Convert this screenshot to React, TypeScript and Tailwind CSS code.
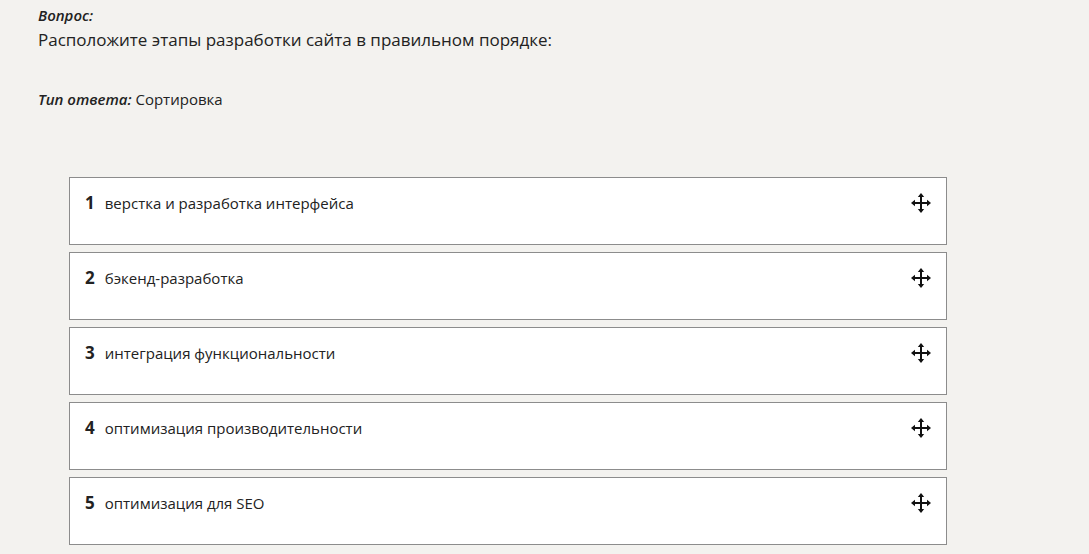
import React from 'react';

const steps = [
  'верстка и разработка интерфейса',
  'бэкенд-разработка',
  'интеграция функциональности',
  'оптимизация производительности',
  'оптимизация для SEO',
];

const MoveIcon = () => (
  <svg width="22" height="22" viewBox="0 0 22 22" fill="none">
    <path d="M11 3v16M3 11h16" stroke="#111" strokeWidth="2" />
    <path d="M11 1l3.2 4h-6.4z" fill="#111" />
    <path d="M11 21l3.2-4h-6.4z" fill="#111" />
    <path d="M1 11l4-3.2v6.4z" fill="#111" />
    <path d="M21 11l-4-3.2v6.4z" fill="#111" />
  </svg>
);

const App: React.FC = () => {
  return (
    <div className="min-h-[554px] bg-[#f3f2ef] text-[#222] pl-[38px] pt-[5px]" style={{ fontFamily: '"Open Sans", "Noto Sans", sans-serif' }}>
      <div className="text-[15px] font-semibold italic leading-[20px] text-[#222]">Вопрос:</div>
      <div className="text-[17px] leading-[26px] mt-[2px] text-[#222]">Расположите этапы разработки сайта в правильном порядке:</div>
      <div className="mt-[35px] text-[15px] leading-[22px]">
        <span className="font-semibold italic">Тип ответа:</span> Сортировка
      </div>

      <div className="mt-[67px] ml-[31px] w-[878px] flex flex-col gap-[7px]">
        {steps.map((s, i) => (
          <div key={i} className="h-[68px] bg-white border border-[#8c8c8c] flex items-start justify-between pl-[15px] pr-[14px] pt-[12px]">
            <div className="flex items-baseline gap-[10px]">
              <span className="text-[17px] font-bold leading-[26px] text-[#222]">{i + 1}</span>
              <span className="text-[15px] leading-[26px] text-[#222]">{s}</span>
            </div>
            <div className="pt-[2px]">
              <MoveIcon />
            </div>
          </div>
        ))}
      </div>
    </div>
  );
};

export default App;
